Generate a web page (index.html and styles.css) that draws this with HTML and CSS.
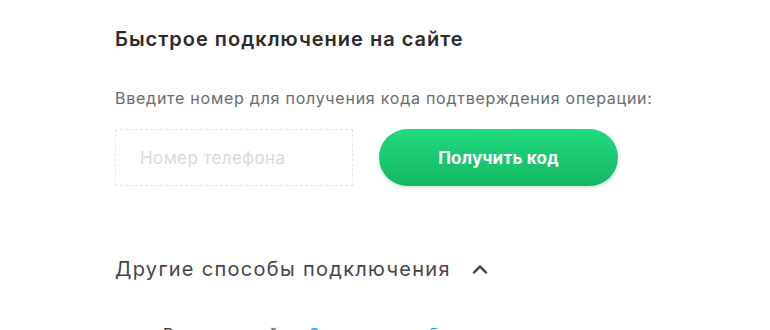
FILE: index.html
```html
<!DOCTYPE html>
<html lang="ru">
<head>
    <meta charset="UTF-8">
    <meta name="viewport" content="width=device-width, initial-scale=1.0">
    <title>Быстрое подключение</title>
    <link rel="stylesheet" href="styles.css">
</head>
<body>
    <div class="container">
        <section class="quick-connect">
            <h2>Быстрое подключение на сайте</h2>
            <p class="hint">Введите номер для получения кода подтверждения операции:</p>
            <form class="phone-form" onsubmit="return false;">
                <input type="tel" class="phone-input" placeholder="Номер телефона">
                <button type="submit" class="code-button">Получить код</button>
            </form>
        </section>

        <section class="other-ways">
            <button type="button" class="other-toggle">
                <span>Другие способы подключения</span>
                <svg class="chevron" width="16" height="10" viewBox="0 0 16 10">
                    <path d="M2 8.5 L8 2.5 L14 8.5" fill="none" stroke="#3a3a3a" stroke-width="2.4" stroke-linecap="round" stroke-linejoin="round"/>
                </svg>
            </button>
            <div class="other-list">
                <span class="other-label">Вход в личный</span>
                <a href="#" class="other-link">Сменить способ</a>
            </div>
        </section>
    </div>
</body>
</html>
```

FILE: styles.css
```css
* {
    margin: 0;
    padding: 0;
    box-sizing: border-box;
}

body {
    font-family: Inter, 'Noto Sans', Arial, sans-serif;
    color: #333;
    background-color: #fff;
}

.container {
    padding: 27px 0 0 115px;
}

.quick-connect h2 {
    font-size: 20px;
    font-weight: 600;
    color: #2b2b2b;
    line-height: 24px;
    letter-spacing: 1px;
    margin-bottom: 37px;
}

.hint {
    font-size: 16px;
    color: #6b6b6b;
    line-height: 20px;
    letter-spacing: 0.75px;
    margin-bottom: 21px;
}

.phone-form {
    display: flex;
    gap: 26px;
}

.phone-input {
    width: 238px;
    height: 57px;
    border: 1px dashed #e6e6e6;
    padding: 0 24px;
    font-family: inherit;
    font-size: 17px;
    letter-spacing: 0.4px;
    color: #333;
    outline: none;
}

.phone-input::placeholder {
    color: #d9d9d9;
}

.code-button {
    width: 239px;
    height: 57px;
    border: none;
    border-radius: 29px;
    background: linear-gradient(180deg, #20da80 0%, #1ac770 55%, #15b862 100%);
    box-shadow: 0 2px 3px rgba(20, 150, 80, 0.2);
    color: #fff;
    font-family: inherit;
    font-size: 17px;
    font-weight: 700;
    letter-spacing: 0.2px;
    cursor: pointer;
}

.other-ways {
    margin-top: 71px;
}

.other-toggle {
    display: flex;
    align-items: center;
    gap: 21px;
    border: none;
    background: none;
    font-family: inherit;
    font-size: 20px;
    color: #454545;
    letter-spacing: 1.3px;
    cursor: pointer;
}

.other-list {
    display: flex;
    gap: 30px;
    margin-top: 43px;
    padding-left: 48px;
    font-size: 16px;
}

.other-label {
    color: #333;
}

.other-link {
    color: #2fa3d6;
    text-decoration: none;
}
```
